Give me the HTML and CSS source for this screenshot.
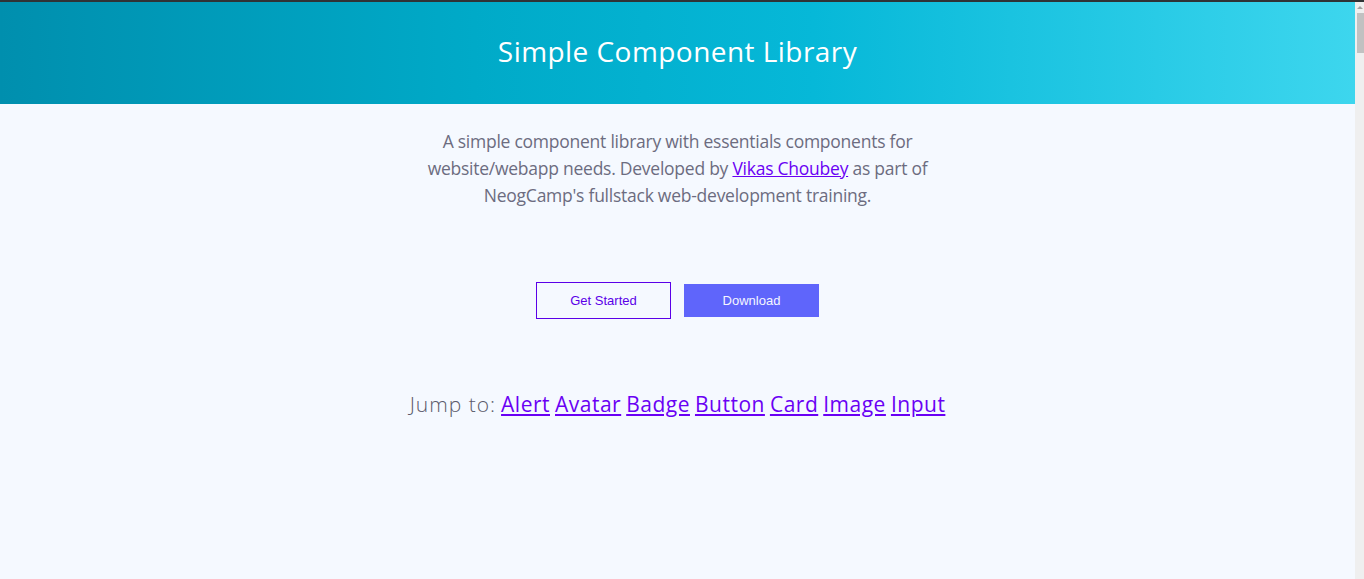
FILE: index.html
```html
<!DOCTYPE html>
<html lang="en">
<head>
<meta charset="utf-8">
<title>Simple Component Library</title>
<link rel="stylesheet" href="styles.css">
</head>
<body>
  <header class="hero">
    <h1 class="hero-title">Simple Component Library</h1>
  </header>
  <main class="main">
    <p class="intro">A simple component library with essentials components for<br>website/webapp needs. Developed by <a href="#" class="link">Vikas Choubey</a> as part of<br>NeogCamp's fullstack web-development training.</p>
    <div class="actions">
      <a href="#" class="btn btn-outline">Get Started</a>
      <a href="#" class="btn btn-solid">Download</a>
    </div>
    <nav class="jump">
      <span class="jump-label">Jump to:</span>
      <a href="#" class="jump-link">Alert</a>
      <a href="#" class="jump-link">Avatar</a>
      <a href="#" class="jump-link">Badge</a>
      <a href="#" class="jump-link">Button</a>
      <a href="#" class="jump-link">Card</a>
      <a href="#" class="jump-link">Image</a>
      <a href="#" class="jump-link">Input</a>
    </nav>
  </main>
  <div class="scrollbar" aria-hidden="true">
    <span class="scroll-arrow"></span>
    <span class="scroll-thumb"></span>
  </div>
</body>
</html>
```
FILE: styles.css
```css
html, body {
  margin: 0;
  padding: 0;
}
html {
  height: 100%;
  overflow: hidden;
  background: #f5f9ff;
}
body {
  min-height: 100%;
  box-sizing: border-box;
  background: #f5f9ff;
  font-family: "Open Sans", "Liberation Sans", sans-serif;
  border-top: 2px solid #2f3336;
  padding-right: 9px;
}
.hero {
  height: 102px;
  background: linear-gradient(to right, #008fae 0%, #00aac8 35%, #06b8d8 60%, #3dd6ee 100%);
  display: flex;
  align-items: center;
  justify-content: center;
}
.hero-title {
  margin: 0 0 4px;
  color: #ffffff;
  font-weight: 400;
  font-size: 28px;
  letter-spacing: 0.45px;
}
.main {
  display: flex;
  flex-direction: column;
  align-items: center;
}
.intro {
  margin: 24px 0 0;
  text-align: center;
  font-size: 17.5px;
  line-height: 27px;
  color: #6c6c80;
  letter-spacing: -0.25px;
}
.link {
  color: #6a00f4;
}
.actions {
  display: flex;
  align-items: center;
  gap: 13px;
  margin-top: 73px;
}
.btn {
  font-family: "Liberation Sans", Arial, sans-serif;
  font-size: 13px;
  text-decoration: none;
  display: flex;
  align-items: center;
  justify-content: center;
  width: 135px;
  box-sizing: border-box;
}
.btn-outline {
  height: 37px;
  border: 1px solid #5b00e8;
  color: #5b00e8;
}
.btn-solid {
  height: 33px;
  background: #5f65fb;
  color: #f5f6ff;
}
.jump {
  margin-top: 71px;
  font-size: 21px;
  display: flex;
  gap: 5px;
  align-items: baseline;
}
.jump-label {
  color: #5a5a6a;
  font-weight: 300;
  letter-spacing: 1px;
}
.jump-link {
  color: #6a00f4;
  font-weight: 500;
  letter-spacing: 0.5px;
}
.scrollbar {
  position: fixed;
  top: 2px;
  right: 0;
  bottom: 0;
  width: 9px;
  background: #efefef;
}
.scroll-arrow {
  position: absolute;
  top: 4px;
  left: 2px;
  width: 0;
  height: 0;
  border-left: 3px solid transparent;
  border-right: 3px solid transparent;
  border-bottom: 3px solid #a3a3a3;
}
.scroll-thumb {
  position: absolute;
  top: 11px;
  left: 2px;
  right: 0;
  height: 40px;
  background: #c1c1c1;
}
```
